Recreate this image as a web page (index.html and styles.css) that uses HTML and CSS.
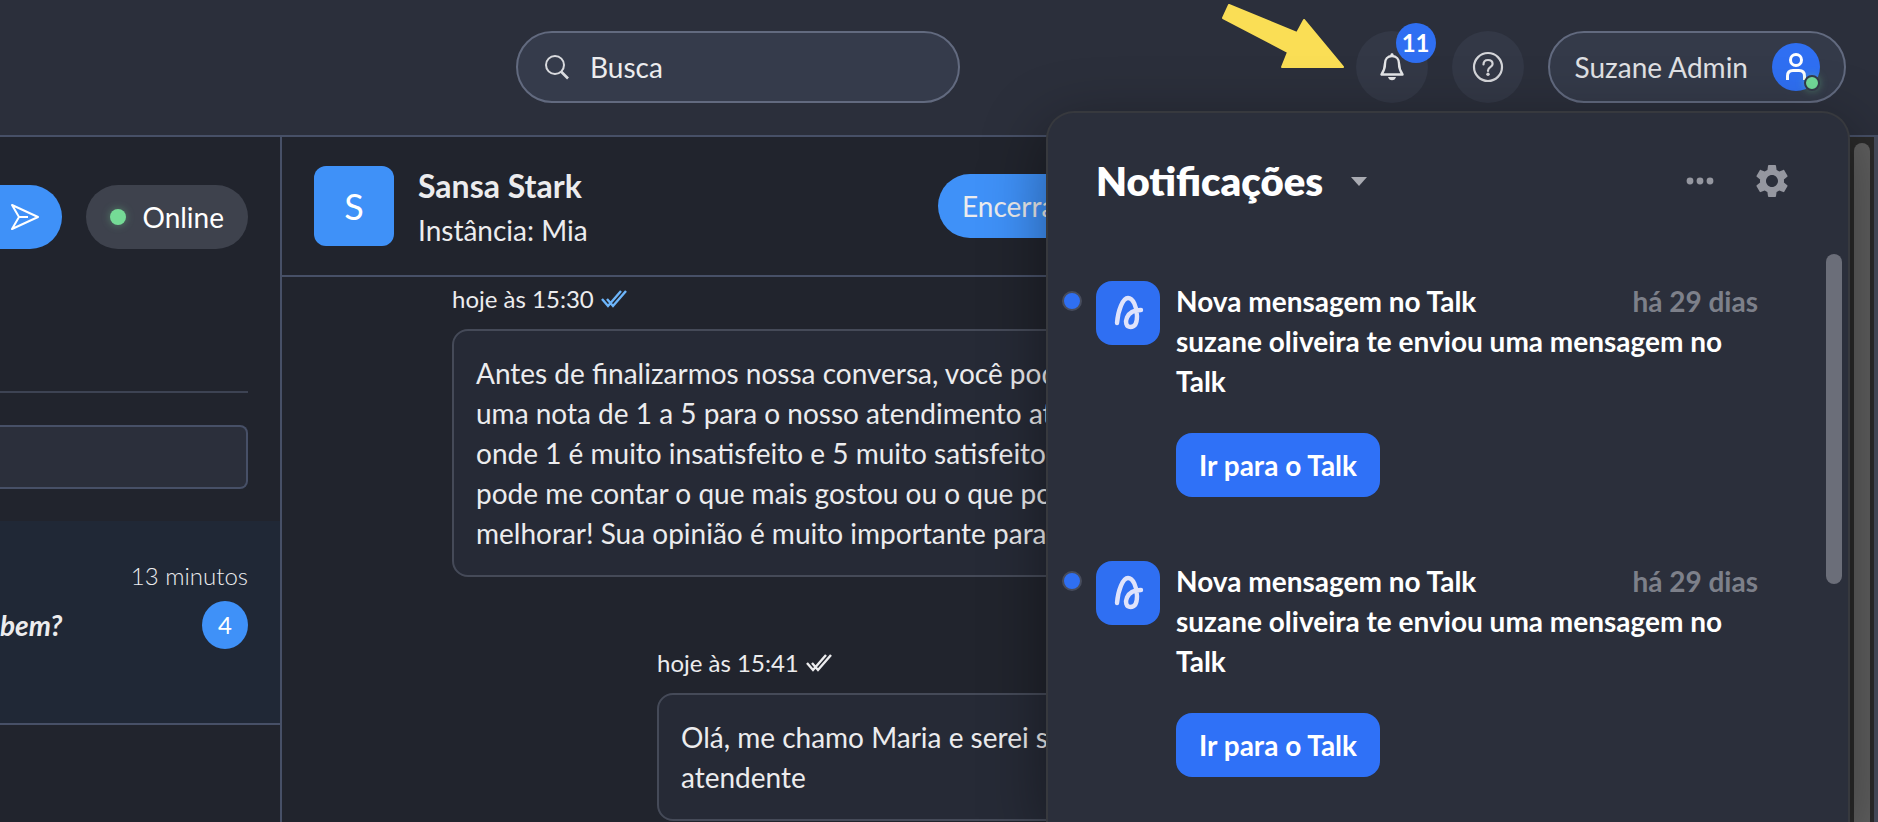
FILE: index.html
```html
<!DOCTYPE html>
<html lang="pt-BR">
  <head>
    <meta charset="UTF-8" />
    <meta name="viewport" content="width=device-width, initial-scale=1.0" />
    <title>Talk</title>
    <link rel="stylesheet" href="styles.css">
  </head>
  <body>
    <header class="topbar">
      <label class="search">
        <svg width="26" height="26" viewBox="0 0 26 26" fill="none" stroke="#d9dade" stroke-width="2">
          <circle cx="11" cy="11" r="9" />
          <path d="M17 17.500L24 24.500" stroke-width="2.600" />
        </svg>
        <input type="text" placeholder="Busca" aria-label="Busca" />
      </label>
      <div class="actions">
        <div class="bell">
          <button class="round" aria-label="Alertas">
            <svg width="26" height="30" viewBox="0 0 26 30" fill="none">
              <path d="M13 4C8.500 4 6 7.500 6 11.500C6 17 4.500 19.500 2.500 22.500H23.500C21.500 19.500 20 17 20 11.500C20 7.500 17.500 4 13 4Z" stroke="#e4e5e7" stroke-width="2.400" stroke-linejoin="round" />
              <path d="M11.500 4V2.500C11.500 0.800 14.500 0.800 14.500 2.500V4Z" fill="#e4e5e7" />
              <path d="M9 25H17C16.500 27 15 28.300 13 28.300S9.500 27 9 25Z" fill="#e4e5e7" />
            </svg>
          </button>
          <span class="bell-count">11</span>
          <svg class="arrow" width="122" height="64" viewBox="0 0 122 64">
            <path d="M7 1L75 29L82 16L121 63H60L66 48L1 14Z" fill="#fade55" stroke="#fade55" stroke-width="2" stroke-linejoin="round" />
          </svg>
        </div>
        <button class="round" aria-label="Ajuda">
          <svg width="32" height="32" viewBox="0 0 32 32" fill="none" stroke="#d4d5d9" stroke-width="2.200">
            <circle cx="16" cy="16" r="14" />
            <path d="M11.500 13.500C11.500 10.500 13.400 9 16 9C18.700 9 20.600 10.600 20.600 13C20.600 16.300 16 16 16 19.500V20" stroke-linecap="round" />
            <circle cx="16" cy="23.300" r="1.700" fill="#d4d5d9" stroke="none" />
          </svg>
        </button>
        <button class="user">
          Suzane Admin
          <span class="user-avatar">
            <svg width="22" height="30" viewBox="0 0 22 30" fill="none" stroke="#fff" stroke-width="3">
              <circle cx="11" cy="8" r="5.500" />
              <path d="M2.500 28V24C2.500 20.500 4.500 18.500 8 18.500H14C17.500 18.500 19.500 20.500 19.500 24V28" />
            </svg>
            <span class="user-status"></span>
          </span>
        </button>
      </div>
    </header>

    <main class="main">
      <aside class="sidebar">
        <div class="sidebar-top">
          <button class="send" aria-label="Enviar">
            <svg width="30" height="28" viewBox="0 0 30 28" fill="none" stroke="#fff" stroke-width="2" stroke-linejoin="round">
              <path d="M2 2L28 14L2 26L9 14Z" />
              <path d="M9 14H18" />
            </svg>
          </button>
          <button class="status"><span class="status-dot"></span>Online</button>
        </div>
        <hr class="line" />
        <input class="filter" type="text" aria-label="Filtrar conversas" />
        <a class="conversation" href="#">
          <span class="time">13 minutos</span>
          <span class="preview"><em>bem?</em><span class="unread">4</span></span>
        </a>
      </aside>

      <section class="chat">
        <div class="chat-header">
          <div class="avatar">S</div>
          <div class="contact">
            <h2>Sansa Stark</h2>
            <p>Instância: Mia</p>
          </div>
          <button class="finish">Encerrar</button>
        </div>
        <div class="messages">
          <article class="message">
            <p class="stamp">
              hoje às 15:30
              <svg class="read" width="28" height="20" viewBox="0 0 28 20" fill="none" stroke-width="2.400">
                <path d="M2 10L8 17L21 2M7 10L13 17L26 2" />
              </svg>
            </p>
            <p class="bubble">
              Antes de finalizarmos nossa conversa, você poderia dar<br />
              uma nota de 1 a 5 para o nosso atendimento até aqui,<br />
              onde 1 é muito insatisfeito e 5 muito satisfeito? Também<br />
              pode me contar o que mais gostou ou o que podemos<br />
              melhorar! Sua opinião é muito importante para nós
            </p>
          </article>
          <article class="message message-reply">
            <p class="stamp">
              hoje às 15:41
              <svg width="28" height="20" viewBox="0 0 28 20" fill="none" stroke-width="2.400">
                <path d="M2 10L8 17L21 2M7 10L13 17L26 2" />
              </svg>
            </p>
            <p class="bubble">
              Olá, me chamo Maria e serei sua<br />
              atendente
            </p>
          </article>
        </div>
      </section>
      <div class="page-scroll"><div class="page-thumb"></div></div>
    </main>

    <section class="panel">
      <div class="panel-header">
        <h1>Notificações</h1>
        <button class="icon-button caret" aria-label="Filtrar">
          <svg width="16" height="10" viewBox="0 0 16 10"><path d="M0 1H16L8 10Z" fill="#a9abb2" /></svg>
        </button>
        <button class="icon-button dots" aria-label="Mais">
          <svg width="28" height="8" viewBox="0 0 28 8" fill="#9597a0">
            <circle cx="4" cy="4" r="3.400" /><circle cx="14" cy="4" r="3.400" /><circle cx="24" cy="4" r="3.400" />
          </svg>
        </button>
        <button class="icon-button" aria-label="Configurações">
          <svg width="40" height="40" viewBox="0 0 24 24" fill="#9597a0">
            <path d="M19.140 12.940c.04-.3.060-.61.060-.94 0-.32-.02-.64-.07-.94l2.030-1.580c.18-.14.230-.41.120-.61l-1.920-3.320c-.12-.22-.37-.29-.59-.22l-2.390.960c-.5-.38-1.030-.7-1.620-.94l-.36-2.540c-.04-.24-.24-.41-.48-.41h-3.840c-.24 0-.43.170-.47.410l-.36 2.540c-.59.240-1.130.570-1.620.940l-2.390-.96c-.22-.08-.47 0-.59.220L2.740 8.870c-.12.210-.08.470.120.610l2.030 1.580c-.05.300-.09.630-.09.940s.02.640.070.940l-2.030 1.580c-.18.140-.23.410-.12.610l1.920 3.320c.12.220.370.290.590.220l2.390-.96c.5.380 1.030.7 1.620.940l.36 2.540c.05.240.24.410.480.410h3.840c.24 0 .44-.17.470-.41l.36-2.540c.59-.24 1.130-.56 1.620-.94l2.390.960c.22.080.47 0 .59-.22l1.920-3.320c.12-.22.070-.47-.12-.61l-2.010-1.580zM12 15.600c-1.980 0-3.600-1.620-3.600-3.600s1.620-3.600 3.600-3.600 3.600 1.620 3.600 3.600-1.620 3.600-3.600 3.600z" />
          </svg>
        </button>
      </div>
      <div class="panel-body">
        <div class="notifications">
          <article class="notification">
            <span class="new-dot"></span>
            <svg class="app-logo" width="64" height="64" viewBox="0 0 64 64" fill="none">
              <path d="M21 42C22 29 27 17 32 17C37 17 41 26 41 35C41 43 38 46 34.500 46C30 46 29 41 31 36.500C33 32 38 29 45 29" stroke="#e0e3fb" stroke-width="4.400" stroke-linecap="round" />
            </svg>
            <div class="details">
              <div class="title-row"><h3>Nova mensagem no Talk</h3><time>há 29 dias</time></div>
              <p>suzane oliveira te enviou uma mensagem no Talk</p>
              <button class="go">Ir para o Talk</button>
            </div>
          </article>
          <article class="notification">
            <span class="new-dot"></span>
            <svg class="app-logo" width="64" height="64" viewBox="0 0 64 64" fill="none">
              <path d="M21 42C22 29 27 17 32 17C37 17 41 26 41 35C41 43 38 46 34.500 46C30 46 29 41 31 36.500C33 32 38 29 45 29" stroke="#e0e3fb" stroke-width="4.400" stroke-linecap="round" />
            </svg>
            <div class="details">
              <div class="title-row"><h3>Nova mensagem no Talk</h3><time>há 29 dias</time></div>
              <p>suzane oliveira te enviou uma mensagem no Talk</p>
              <button class="go">Ir para o Talk</button>
            </div>
          </article>
        </div>
        <div class="panel-thumb"></div>
      </div>
    </section>
  </body>
</html>
```
FILE: styles.css
```css
* {
  box-sizing: border-box;
}
html,
body {
  margin: 0;
  padding: 0;
}
body {
  display: flex;
  flex-direction: column;
  height: 100vh;
  overflow: hidden;
  position: relative;
  background-color: #21242d;
  color: #ececee;
  font-family: Lato, "Open Sans", sans-serif;
  font-size: 28px;
  line-height: 40px;
}
h1,
h2,
h3,
p {
  margin: 0;
}
button,
input {
  font: inherit;
  color: inherit;
  border: none;
  padding: 0;
  outline: none;
}
button {
  display: flex;
  align-items: center;
  justify-content: center;
  flex: none;
  cursor: pointer;
}
svg {
  flex: none;
}

/* top bar */
.topbar {
  display: flex;
  justify-content: space-between;
  padding: 31px 32px 32px 516px;
  background-color: #2b2f3b;
  border-bottom: 2px solid #475067;
}
.search {
  display: flex;
  align-items: center;
  gap: 20px;
  width: 444px;
  height: 72px;
  padding: 0 26px;
  border: 2px solid #626a7f;
  border-radius: 36px;
  background-color: #353b4b;
}
.search input {
  flex: 1;
  min-width: 0;
  background: none;
}
.search input::placeholder {
  color: #ececee;
  opacity: 1;
}
.actions {
  display: flex;
  gap: 24px;
}
.bell {
  position: relative;
}
.round {
  width: 72px;
  height: 72px;
  border-radius: 50%;
  background-color: #333846;
}
.bell-count {
  position: absolute;
  top: -8px;
  right: -8px;
  width: 40px;
  height: 40px;
  border-radius: 50%;
  background-color: #2f6ff2;
  color: white;
  font-size: 24px;
  font-weight: bold;
  text-align: center;
}
.arrow {
  position: absolute;
  top: -27px;
  right: 84px;
}
.user {
  gap: 24px;
  height: 72px;
  padding: 0 24px 0 25px;
  border: 2px solid #626a7f;
  border-radius: 36px;
  background-color: #343a49;
  color: #e0e1e4;
}
.user-avatar {
  display: flex;
  align-items: center;
  justify-content: center;
  position: relative;
  width: 48px;
  height: 48px;
  border-radius: 50%;
  background-color: #2f6ff2;
}
.user-status {
  position: absolute;
  right: 0;
  bottom: 0;
  width: 16px;
  height: 16px;
  border: 2px solid #343a49;
  border-radius: 50%;
  background-color: #72d998;
  box-shadow: 0 0 8px #72d99866;
}

/* sidebar */
.main {
  display: flex;
  flex: 1;
  min-height: 0;
}
.sidebar {
  flex: none;
  width: 282px;
  overflow: hidden;
  border-right: 2px solid #475067;
}
.sidebar-top {
  display: flex;
  justify-content: flex-end;
  gap: 24px;
  margin-right: 32px;
  padding: 48px 0 142px;
}
.send {
  width: 110px;
  height: 64px;
  padding-right: 22px;
  justify-content: flex-end;
  border-radius: 32px;
  background-color: #3f91f8;
}
.status {
  gap: 17px;
  height: 64px;
  padding: 0 24px;
  border-radius: 32px;
  background-color: #3e424d;
  color: white;
}
.status-dot {
  width: 16px;
  height: 16px;
  border-radius: 50%;
  background-color: #75db96;
  box-shadow: 0 0 8px #75db9666;
}
.line {
  margin: 0 32px 32px 0;
  border: none;
  border-top: 2px solid #3d4353;
}
.filter {
  display: block;
  width: calc(100% - 32px);
  height: 64px;
  padding: 0 16px;
  border: 2px solid #475067;
  border-left: none;
  border-radius: 0 8px 8px 0;
  background-color: #2b2f3b;
}
.conversation {
  display: flex;
  flex-direction: column;
  gap: 5px;
  height: 204px;
  margin-top: 32px;
  padding: 35px 32px 0 0;
  border-bottom: 2px solid #475067;
  background-color: #202836;
  color: inherit;
  text-decoration: none;
}
.time {
  font-size: 24px;
  font-weight: 300;
  text-align: right;
}
.preview {
  display: flex;
  align-items: center;
  justify-content: space-between;
  font-weight: bold;
}
.unread {
  width: 46px;
  height: 48px;
  border-radius: 50%;
  background-color: #3f91f8;
  color: white;
  font-size: 24px;
  font-weight: normal;
  line-height: 48px;
  text-align: center;
}

/* chat */
.chat {
  flex: 1;
  min-width: 0;
  overflow: hidden;
}
.chat-header {
  display: flex;
  align-items: center;
  gap: 24px;
  height: 140px;
  padding: 0 32px;
  border-bottom: 2px solid #475067;
}
.avatar {
  width: 80px;
  height: 80px;
  border-radius: 12px;
  background-color: #3f91f8;
  color: white;
  font-size: 36px;
  line-height: 80px;
  text-align: center;
}
.contact {
  width: 496px;
}
.contact h2 {
  font-size: 32px;
  line-height: 48px;
}
.finish {
  height: 64px;
  padding: 0 24px;
  border-radius: 32px;
  background-color: #3f91f8;
}
.messages {
  padding-left: 170px;
}
.message {
  padding-bottom: 64px;
}
.message-reply {
  padding-left: 205px;
  padding-bottom: 0;
}
.stamp {
  display: flex;
  align-items: center;
  gap: 6px;
  height: 52px;
  padding-bottom: 8px;
  font-size: 24px;
}
.stamp svg {
  stroke: #ececee;
}
.stamp .read {
  stroke: #6db5fa;
}
.bubble {
  width: 800px;
  padding: 22px;
  border: 2px solid #454a58;
  border-radius: 16px;
  background-color: #262a36;
  white-space: nowrap;
}
.page-scroll {
  flex: none;
  width: 28px;
  padding: 6px 4px 0 4px;
  border-right: 4px solid #474c5c;
  background-color: #2a2a2a;
}
.page-thumb {
  width: 16px;
  height: 100%;
  border-radius: 8px 8px 0 0;
  background-color: #5f5f5f;
}

/* notifications */
.panel {
  display: flex;
  flex-direction: column;
  position: absolute;
  top: 111px;
  right: 28px;
  bottom: 0;
  width: 804px;
  border: 2px solid #37393e;
  border-bottom: none;
  border-radius: 28px 28px 0 0;
  background-color: #2b2f3b;
  box-shadow: 0 16px 64px rgba(0, 0, 0, 0.4);
  color: white;
}
.panel-header {
  display: flex;
  align-items: center;
  padding: 40px 56px 45px 48px;
}
.panel-header h1 {
  font-size: 40px;
  font-weight: 800;
  line-height: 56px;
}
.icon-button {
  background: none;
}
.caret {
  margin: 0 auto 0 28px;
}
.dots {
  margin-right: 38px;
}
.panel-body {
  display: flex;
  justify-content: space-between;
  flex: 1;
  min-height: 0;
  overflow: hidden;
  padding: 0 6px 0 14px;
}
.notifications {
  width: 696px;
  padding-top: 27px;
}
.notification {
  display: flex;
  align-items: flex-start;
  padding-bottom: 64px;
}
.new-dot {
  flex: none;
  width: 20px;
  height: 20px;
  margin: 10px 14px 0 0;
  border: 2px solid #474c5c;
  border-radius: 50%;
  background-color: #2f6ff2;
}
.app-logo {
  margin-right: 16px;
  border-radius: 16px;
  background-color: #2f6ff2;
}
.details {
  flex: 1;
  font-size: 28px;
  font-weight: bold;
}
.title-row {
  display: flex;
  justify-content: space-between;
}
.details h3 {
  font-size: 28px;
}
.title-row time {
  color: #7d808a;
}
.go {
  height: 64px;
  margin-top: 32px;
  padding: 0 23px;
  border-radius: 16px;
  background-color: #2f71f7;
}
.panel-thumb {
  width: 16px;
  height: 330px;
  border-radius: 8px;
  background-color: #6b6e79;
}
```
